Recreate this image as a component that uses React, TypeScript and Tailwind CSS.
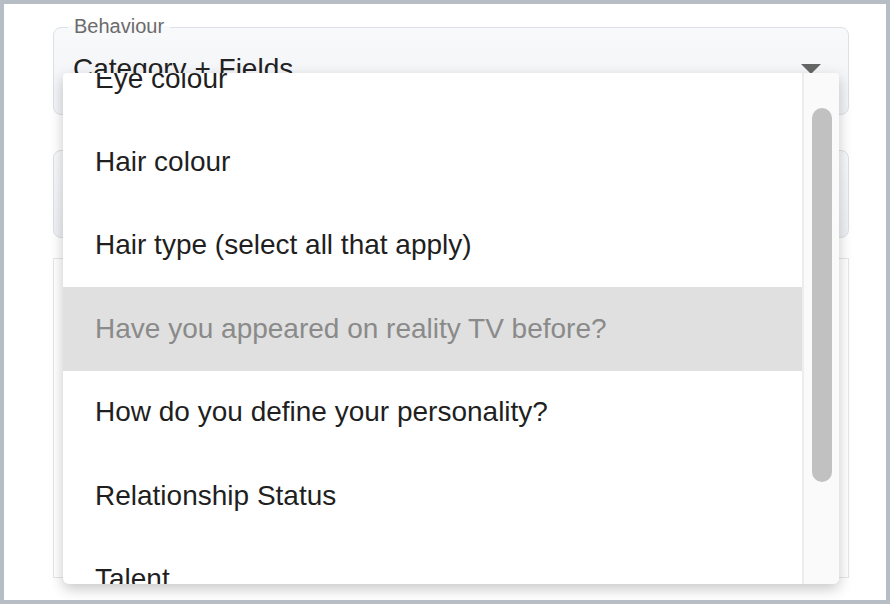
const OPTIONS: { label: string; disabled?: boolean }[] = [
  { label: 'Eye colour' },
  { label: 'Hair colour' },
  { label: 'Hair type (select all that apply)' },
  { label: 'Have you appeared on reality TV before?', disabled: true },
  { label: 'How do you define your personality?' },
  { label: 'Relationship Status' },
  { label: 'Talent' },
];

export default function App() {
  return (
    <div
      className="relative w-[890px] h-[604px] overflow-hidden border-4 border-[#b6bdc4] bg-white"
      style={{ fontFamily: '"Liberation Sans", Arial, sans-serif' }}
    >
      <div className="flex flex-col pl-[49px] pr-[37px] pt-[23px]">
        {/* Behaviour select */}
        <div className="relative h-[88px] rounded-[8px] border border-[#dde0e6] bg-gradient-to-b from-[#f8f9fb] to-[#f1f3f6]">
          <span className="absolute -top-[14px] left-[14px] px-[6px] text-[20px] leading-[24px] text-[#6b6b6b] bg-gradient-to-b from-white from-50% to-[#f8f9fb] to-50%">
            Behaviour
          </span>
          <div className="flex items-start pl-[19px] pt-[25px] pr-[27px]">
            <span className="flex-1 text-[28px] leading-[32px] text-[#222]">Category + Fields</span>
            <span className="mt-[11px] w-0 h-0 border-l-[10px] border-r-[10px] border-t-[10px] border-l-transparent border-r-transparent border-t-[#666]" />
          </div>
        </div>

        {/* second select */}
        <div className="mt-[35px] h-[88px] rounded-[8px] border border-[#dde0e6] bg-gradient-to-b from-[#f8f9fb] to-[#eef0f4]" />

        {/* content panel */}
        <div className="mt-[20px] h-[320px] border border-[#e6e6e6] bg-white" />
      </div>

      {/* open dropdown menu */}
      <div className="absolute left-[59px] top-[69px] w-[776px] h-[511px] flex overflow-hidden rounded-t-[4px] rounded-b-[6px] bg-white shadow-[0_5px_14px_rgba(0,0,0,0.22)]">
        <div className="flex-1 overflow-hidden">
          <ul className="-mt-[36px] flex flex-col">
            {OPTIONS.map((o) => (
              <li
                key={o.label}
                className={
                  o.disabled
                    ? 'h-[83.4px] shrink-0 flex items-center pl-[32px] text-[28px] text-[#8a8a8a] bg-[#e0e0e0]'
                    : 'h-[83.4px] shrink-0 flex items-center pl-[32px] text-[28px] text-[#1f1f1f]'
                }
              >
                {o.label}
              </li>
            ))}
          </ul>
        </div>
        <div className="w-[37px] shrink-0 border-l-2 border-[#ededed] bg-[#fafafa] pl-[8px] pt-[35px]">
          <div className="w-[20px] h-[374px] rounded-full bg-[#c1c1c1]" />
        </div>
      </div>
    </div>
  );
}
